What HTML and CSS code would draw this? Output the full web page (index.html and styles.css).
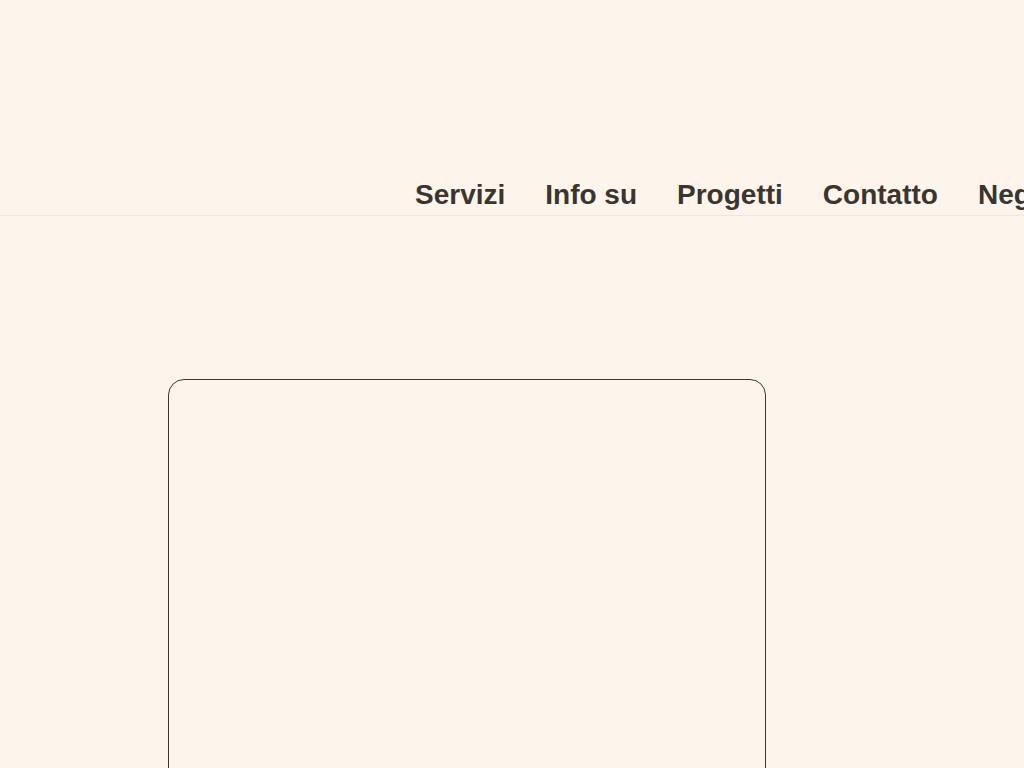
FILE: index.html
```html
<!DOCTYPE html>
<html lang="it">
<head>
<meta charset="utf-8">
<title>Studio</title>
<link rel="stylesheet" href="styles.css">
</head>
<body>
<header class="site-header">
  <nav class="main-nav">
    <a class="nav-link" href="#servizi">Servizi</a>
    <a class="nav-link" href="#info">Info su</a>
    <a class="nav-link" href="#progetti">Progetti</a>
    <a class="nav-link" href="#contatto">Contatto</a>
    <a class="nav-link" href="#negozio">Negozio</a>
    <a class="nav-link" href="#blog">Blog</a>
  </nav>
</header>
<main class="content">
  <section class="card"></section>
</main>
</body>
</html>
```

FILE: styles.css
```css
html, body {
  margin: 0;
  padding: 0;
}

body {
  background: #fdf5eb;
  color: #3b352f;
  font-family: "Liberation Sans", Arial, sans-serif;
  width: 1477px;
}

.site-header {
  padding-top: 179px;
  border-bottom: 1px solid #f1e6da;
}

.main-nav {
  display: flex;
  gap: 40px;
  padding-left: 415px;
  padding-bottom: 4px;
}

.nav-link {
  font-size: 28px;
  font-weight: bold;
  color: #3b352f;
  text-decoration: none;
  white-space: nowrap;
}

.content {
  padding-top: 163px;
  padding-left: 168px;
  min-height: 8700px;
}

.card {
  width: 596px;
  height: 900px;
  border: 1px solid #3b352f;
  border-radius: 16px;
}
```
